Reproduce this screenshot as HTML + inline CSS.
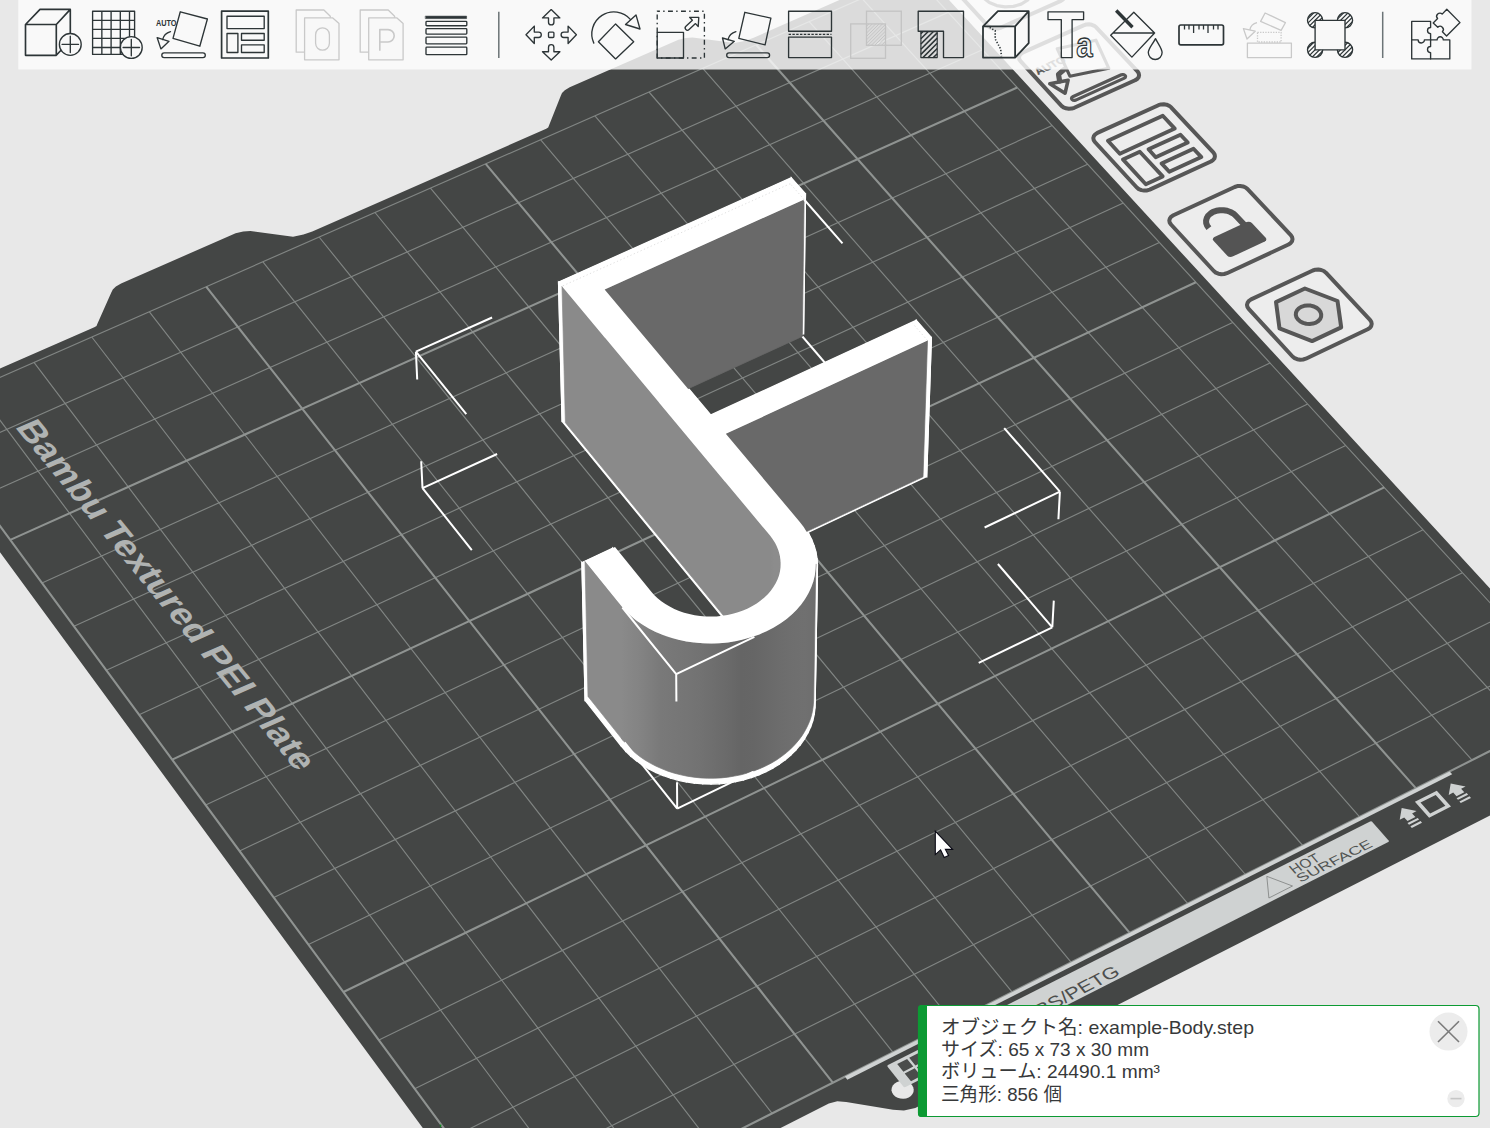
<!DOCTYPE html>
<html><head><meta charset="utf-8"><title>Bambu Studio</title>
<style>
html,body{margin:0;padding:0;background:#e8e8e8;overflow:hidden;font-family:"Liberation Sans",sans-serif}
svg{display:block}
</style></head><body>
<svg width="1490" height="1128" viewBox="0 0 1490 1128">
<title>Bambu Studio 3D view</title><desc>Bambu Textured PEI Plate. オブジェクト名: example-Body.step サイズ: 65 x 73 x 30 mm ボリューム: 24490.1 mm³ 三角形: 856 個</desc>
<rect width="1490" height="1128" fill="#e8e8e8"/>
<path d="M519.7 1260 L828.8 1103.6 L837.3 1101.3 L846.2 1102 L893.1 1109.8 L903.9 1110.6 L915.3 1107.9 L1632.2 743.1 L917.5 -34.3 L753 38 L744.5 40.9 L734.5 43 L692.6 37.4 L685.6 37.9 L678.4 39.8 L569.7 87.3 L564.8 90.2 L562 93 L560.7 95.9 L548.9 125.8 L548.2 127.6 L546.2 128.8 L312.3 231.5 L303.5 234.6 L293 236.7 L250.4 230.9 L243.2 231.4 L235.6 233.3 L121.1 283.4 L115.9 286.5 L112.8 289.5 L111.3 292.5 L97.3 324 L96.5 326 L94.3 327.2 L-102 413.4Z" fill="#444645"/>
<path d="M912 1085.1 L910.1 1083.3 L907.7 1082 L905 1081.1 L902.1 1080.9 L899.2 1081.3 L896.6 1082.3 L894.4 1083.7 L892.8 1085.6 L891.8 1087.8 L891.5 1090.2 L892.1 1092.5 L893.3 1094.6 L895.2 1096.4 L897.6 1097.7 L900.3 1098.6 L903.2 1098.8 L906.1 1098.4 L908.7 1097.4 L910.9 1095.9 L912.5 1094 L913.5 1091.9 L913.7 1089.5 L913.2 1087.2Z" fill="#e8e8e8"/>
<path d="M587.3 1206.6L-24.1 387.9M487.7 1187.8L1542.4 659.8M649.4 1175.3L34 362.4M451 1138L1502.2 616M711 1144.2L91.8 337M414.7 1088.8L1462.4 572.7M772.1 1113.4L149.2 311.7M378.9 1040.1L1423.1 529.8M893 1052.3L262.9 261.8M308.4 944.5L1345.7 445.5M952.8 1022.1L319.1 237M273.8 897.5L1307.7 404M1012.2 992.2L375 212.5M239.5 851L1270 363M1071.2 962.4L430.5 188.1M205.7 805.1L1232.7 322.4M1187.8 903.6L540.5 139.7M139.1 714.7L1159.4 242.5M1245.4 874.5L594.9 115.8M106.4 670.3L1123.3 203.1M1302.7 845.5L649 92M74 626.3L1087.6 164.2M1359.6 816.8L702.8 68.4M42 582.9L1052.2 125.6M1472.1 760.1L809.2 21.6M-21 497.4L982.5 49.8M1527.7 732L861.9 -1.6M-52 455.3L948.2 12.4M1583 704.1L914.3 -24.6M-82.7 413.7L914.3 -24.6" stroke="#818583" stroke-width="1.15" fill="none"/>
<path d="M524.8 1238.2L-82.7 413.7M524.8 1238.2L1583 704.1M832.8 1082.7L206.2 286.7M343.4 992L1384.2 487.4M1129.7 932.9L485.7 163.8M172.2 759.6L1195.9 282.2M1416 788.4L756.2 44.9M10.3 539.9L1017.2 87.5" stroke="#8f9391" stroke-width="2.1" fill="none"/>
<path d="M440.4 1128L439.6 1124.6L441.6 1124.8Z" fill="#0d8a1c"/>
<text transform="matrix(0.633 0.774 -0.914 0.404 14.6 426.7)" font-family="'Liberation Sans', sans-serif" font-size="35" font-weight="bold" fill="#b0b3b2" textLength="446" lengthAdjust="spacingAndGlyphs">Bambu Textured PEI Plate</text>
<path d="M847.3 1079.7 L1452.2 774.2 L1449.7 771.4 L844.9 1076.6Z" fill="#cfd2d2"/>
<path d="M1372.1 821.8 L1371.2 821.3 L1370.1 821.4 L888 1065.1 L887.4 1065.8 L887.6 1066.7 L903.5 1086.7 L904.4 1087.2 L905.5 1087 L1388.3 842.1 L1388.9 841.4 L1388.6 840.6Z" fill="#cfd2d2"/>
<path d="M911 1081.2 L920.9 1076.1 L914.7 1068.3 L904.7 1073.4ZM903.4 1071.7 L913.3 1066.6 L907.1 1058.9 L897.2 1063.9ZM923 1075.1 L932.9 1070 L926.7 1062.3 L916.8 1067.3ZM915.4 1065.6 L925.3 1060.6 L919.1 1052.8 L909.2 1057.8Z" fill="#4a4c4b"/>
<text transform="matrix(0.888 -0.459 0.627 0.778 988 1043.2)" font-family="'Liberation Sans', sans-serif" font-size="17.6" fill="#4c4e4d" textLength="150" lengthAdjust="spacingAndGlyphs">PLA/ABS/PETG</text>
<text transform="matrix(0.892 -0.452 0.65 0.76 1294.1 874.2)" font-family="'Liberation Sans', sans-serif" font-size="14" fill="#505251" textLength="30.6" lengthAdjust="spacingAndGlyphs">HOT</text>
<text transform="matrix(0.894 -0.448 0.65 0.76 1300.6 882.7)" font-family="'Liberation Sans', sans-serif" font-size="13" fill="#505251" textLength="81.7" lengthAdjust="spacingAndGlyphs">SURFACE</text>
<path d="M1266.8 876.3 L1268.9 898 L1292.5 886Z" fill="none" stroke="#7c7f7e" stroke-width="0.8" stroke-linejoin="round"/>
<path d="M1401.7 808.1 L1416.6 811.1 L1412.1 813.4 L1415.4 817.1 L1407.5 821.1 L1404.2 817.4 L1399.7 819.7ZM1407.5 823 L1417.7 817.9 L1419.1 819.5 L1409 824.7ZM1410.4 826.3 L1420.6 821.1 L1422 822.7 L1411.8 827.9ZM1450.7 783.4 L1465.6 786.4 L1461.1 788.7 L1464.3 792.3 L1456.5 796.3 L1453.2 792.6 L1448.7 794.9ZM1456.6 798.2 L1466.7 793.1 L1468.1 794.7 L1458 799.8ZM1459.4 801.4 L1469.5 796.3 L1471 797.9 L1460.8 803Z" fill="#cfd2d2"/>
<path d="M1429.1 817.8 L1451 806.6 L1436.8 790.7 L1414.9 801.8ZM1430.2 813.6 L1445.4 805.8 L1435.7 794.9 L1420.5 802.6Z" fill="#cfd2d2" fill-rule="evenodd"/>
<path d="M1325.9 272.7 L1323.8 271 L1321.2 270 L1318.3 269.5 L1315.4 269.7 L1312.8 270.5 L1251.1 299.4 L1249 300.8 L1247.6 302.7 L1247 304.8 L1247.4 306.9 L1248.7 308.9 L1292.5 356.5 L1294.6 358.1 L1297.2 359.2 L1300.2 359.7 L1303.1 359.5 L1305.8 358.7 L1367.7 329.3 L1369.9 327.9 L1371.2 326 L1371.7 323.9 L1371.3 321.8 L1370 319.8Z" fill="#ededed" stroke="#575757" stroke-width="4.0" stroke-linejoin="round"/>
<path d="M1337.5 301 L1304.9 288.5 L1276 302.1 L1279.5 328.4 L1312.1 341.1 L1341.2 327.4Z" fill="#d8d8d8" stroke="#575757" stroke-width="4.0" stroke-linejoin="round" stroke-linecap="round"/>
<path d="M1319 309.8 L1316.7 307.9 L1313.9 306.5 L1310.7 305.6 L1307.4 305.4 L1304.2 305.8 L1301.2 306.8 L1298.8 308.4 L1297 310.3 L1296 312.6 L1295.8 315 L1296.5 317.4 L1298.1 319.6 L1300.3 321.5 L1303.1 322.9 L1306.3 323.8 L1309.7 324 L1312.9 323.6 L1315.9 322.6 L1318.3 321 L1320.1 319.1 L1321.1 316.8 L1321.2 314.4 L1320.5 312Z" fill="#d8d8d8" stroke="#575757" stroke-width="4.0" stroke-linejoin="round" stroke-linecap="round"/>
<path d="M1247.6 189.1 L1245.6 187.5 L1243.1 186.4 L1240.2 186 L1237.3 186.1 L1234.7 187 L1173.4 215.3 L1171.3 216.6 L1169.9 218.4 L1169.3 220.5 L1169.7 222.6 L1171 224.5 L1213.8 271 L1215.8 272.6 L1218.4 273.7 L1221.3 274.2 L1224.2 274 L1226.9 273.2 L1288.5 244.5 L1290.6 243.1 L1292 241.3 L1292.5 239.2 L1292.1 237.1 L1290.8 235.2Z" fill="#ededed" stroke="#575757" stroke-width="4.0" stroke-linejoin="round"/>
<path d="M1251.9 222.9 L1250.4 222 L1248.5 221.7 L1246.7 222.1 L1214.4 237 L1213.2 238.1 L1212.8 239.4 L1213.5 240.8 L1227.3 255.7 L1228.7 256.7 L1230.7 257 L1232.5 256.6 L1264.8 241.5 L1266 240.5 L1266.4 239.1 L1265.7 237.8Z" fill="#545454"/>
<path d="M1208.9 228.1 L1208.9 228.1 L1207.2 225.8 L1206.2 223.2 L1206.1 220.6 L1206.8 218 L1208.2 215.6 L1210.4 213.6 L1213.1 211.9 L1216.3 210.8 L1219.9 210.2 L1223.5 210.2 L1227.1 210.8 L1230.4 212 L1233.4 213.6 L1235.8 215.7 L1244.3 224.8" fill="none" stroke="#545454" stroke-width="6" stroke-linecap="butt" stroke-linejoin="round"/>
<path d="M1171.1 107.3 L1169.2 105.8 L1166.6 104.7 L1163.8 104.3 L1161 104.4 L1158.4 105.2 L1097.4 132.9 L1095.3 134.3 L1093.9 136 L1093.3 138 L1093.7 140.1 L1094.9 142 L1136.8 187.5 L1138.8 189.1 L1141.4 190.1 L1144.2 190.6 L1147.1 190.4 L1149.7 189.6 L1210.9 161.5 L1213 160.1 L1214.4 158.4 L1214.9 156.4 L1214.6 154.3 L1213.3 152.4Z" fill="#ededed" stroke="#575757" stroke-width="4.0" stroke-linejoin="round"/>
<path d="M1119.8 153.7 L1174.8 128.6 L1162.8 115.8 L1107.9 140.8Z" fill="none" stroke="#575757" stroke-width="3.8" stroke-linejoin="round" stroke-linecap="round"/>
<path d="M1145.8 184.2 L1162.7 176.4 L1139.8 151.7 L1122.9 159.4Z" fill="none" stroke="#575757" stroke-width="3.8" stroke-linejoin="round" stroke-linecap="round"/>
<path d="M1155.7 157.2 L1187.8 142.5 L1180.5 134.7 L1148.5 149.3Z" fill="none" stroke="#575757" stroke-width="3.8" stroke-linejoin="round" stroke-linecap="round"/>
<path d="M1169.3 171.8 L1201.4 157.1 L1193.5 148.7 L1161.5 163.4Z" fill="none" stroke="#575757" stroke-width="3.8" stroke-linejoin="round" stroke-linecap="round"/>
<path d="M1096.2 27.3 L1094.3 25.8 L1091.8 24.8 L1089 24.3 L1086.2 24.5 L1083.6 25.3 L1023.1 52.4 L1021 53.7 L1019.6 55.4 L1019 57.4 L1019.3 59.4 L1020.5 61.2 L1061.5 105.8 L1063.5 107.3 L1066 108.3 L1068.8 108.8 L1071.7 108.6 L1074.3 107.8 L1135.1 80.3 L1137.2 79 L1138.6 77.3 L1139.1 75.3 L1138.7 73.3 L1137.5 71.4Z" fill="#ededed" stroke="#575757" stroke-width="4.0" stroke-linejoin="round"/>
<path d="M1125.1 75.5 L1124.1 74.8 L1122.7 74.5 L1121.3 74.8 L1072.7 96.8 L1071.8 97.5 L1071.5 98.5 L1072 99.5 L1072 99.5 L1073 100.2 L1074.4 100.4 L1075.8 100.1 L1124.4 78.1 L1125.3 77.4 L1125.6 76.4 L1125.1 75.5Z" fill="none" stroke="#575757" stroke-width="3.2" stroke-linejoin="round" stroke-linecap="round"/>
<path d="M1049.8 83.7 L1068.1 80.2 L1065.1 93.2Z" fill="#ededed" stroke="#575757" stroke-width="3.6" stroke-linejoin="round" stroke-linecap="round"/>
<path d="M1063.8 69.7 L1058.5 74.4 L1059.6 80.9" fill="none" stroke="#575757" stroke-width="5.2" stroke-linejoin="round" stroke-linecap="round"/>
<path d="M1057.2 48.7 L1095.9 40.2 L1108.8 68.3 L1069.9 76.2Z" fill="none" stroke="#575757" stroke-width="3.2" stroke-linejoin="round" stroke-linecap="round"/>
<text transform="matrix(1.03 -0.481 0.712 0.782 1038 75.1)" font-family="'Liberation Sans', sans-serif" font-size="10" font-weight="bold" fill="#575757" stroke="#575757" stroke-width="0.3">AUTO</text>
<path d="M1023 -51 L1021.1 -52.4 L1018.6 -53.5 L1015.9 -53.9 L1013.1 -53.7 L1010.5 -53 L950.3 -26.5 L948.2 -25.2 L946.8 -23.5 L946.2 -21.6 L946.5 -19.6 L947.7 -17.8 L987.8 25.8 L989.8 27.3 L992.2 28.3 L995 28.8 L997.8 28.6 L1000.4 27.8 L1060.9 0.9 L1062.9 -0.4 L1064.3 -2.1 L1064.9 -4 L1064.6 -6 L1063.4 -7.8Z" fill="#ededed" stroke="#575757" stroke-width="4.0" stroke-linejoin="round"/>
<path d="M1028.8 -22 L1023.1 -26.5 L1015.7 -29.5 L1007.5 -30.8 L999.1 -30.3 L991.4 -28 L985.1 -24.2 L980.9 -19.1 L979.2 -13.3 L980.1 -7.4 L983.6 -2 L989.3 2.5 L996.7 5.6 L1005 6.9 L1013.5 6.4 L1021.2 4.1 L1027.5 0.2 L1031.6 -4.9 L1033.3 -10.7 L1032.3 -16.6Z" fill="none" stroke="#575757" stroke-width="3.2" stroke-linejoin="round" stroke-linecap="round"/>
<path d="M803.6 333.5 L789.7 317.4 L791.3 177.7 L805.5 193.8Z" fill="#fff" stroke="#fff" stroke-width="1.2"/>
<path d="M789.7 317.4 L562.1 421.4 L558.5 282.1 L791.3 177.7Z" fill="#fff" stroke="#fff" stroke-width="1.2"/>
<path d="M604.6 424.7 L803.6 333.5 L805.5 193.8 L602 285.4Z" fill="#fff" stroke="#fff" stroke-width="1.2"/>
<path d="M926.7 476.6 L911.9 459.5 L916.3 320.3 L931.4 337.5Z" fill="#fff" stroke="#fff" stroke-width="1.2"/>
<path d="M711 553.7 L604.6 424.7 L602 285.4 L710.8 415Z" fill="#fff" stroke="#fff" stroke-width="1.2"/>
<path d="M911.9 459.5 L711 553.7 L710.8 415 L916.3 320.3Z" fill="#fff" stroke="#fff" stroke-width="1.2"/>
<path d="M725.4 571.3 L926.7 476.6 L931.4 337.5 L725.6 432.6Z" fill="#fff" stroke="#fff" stroke-width="1.2"/>
<path d="M562.1 421.4 L769.6 674.7 L770.7 536.6 L558.5 282.1Z" fill="#fff" stroke="#fff" stroke-width="1.2"/>
<path d="M799.1 660.5 L725.4 571.3 L725.6 432.6 L800.9 522.4Z" fill="#fff" stroke="#fff" stroke-width="1.2"/>
<path d="M803.2 666 L799.1 660.5 L800.9 522.4 L805.1 527.9Z" fill="#fff" stroke="#fff" stroke-width="1.2"/>
<path d="M806.7 671.6 L803.2 666 L805.1 527.9 L808.7 533.5Z" fill="#fff" stroke="#fff" stroke-width="1.2"/>
<path d="M809.6 677.5 L806.7 671.6 L808.7 533.5 L811.7 539.4Z" fill="#fff" stroke="#fff" stroke-width="1.2"/>
<path d="M769.6 674.7 L772.3 678.3 L773.5 540.2 L770.7 536.6Z" fill="#fff" stroke="#fff" stroke-width="1.2"/>
<path d="M772.3 678.3 L774.6 682.1 L775.9 544 L773.5 540.2Z" fill="#fff" stroke="#fff" stroke-width="1.2"/>
<path d="M812 683.5 L809.6 677.5 L811.7 539.4 L814.1 545.5Z" fill="#fff" stroke="#fff" stroke-width="1.2"/>
<path d="M774.6 682.1 L776.6 686 L777.9 548 L775.9 544Z" fill="#fff" stroke="#fff" stroke-width="1.2"/>
<path d="M813.7 689.7 L812 683.5 L814.1 545.5 L815.9 551.7Z" fill="#fff" stroke="#fff" stroke-width="1.2"/>
<path d="M776.6 686 L778.1 690 L779.5 552 L777.9 548Z" fill="#fff" stroke="#fff" stroke-width="1.2"/>
<path d="M778.1 690 L779.2 694.1 L780.6 556.1 L779.5 552Z" fill="#fff" stroke="#fff" stroke-width="1.2"/>
<path d="M814.8 695.9 L813.7 689.7 L815.9 551.7 L817 558Z" fill="#fff" stroke="#fff" stroke-width="1.2"/>
<path d="M615 686.3 L585.1 700.5 L581.9 562.6 L612.6 548.3Z" fill="#fff" stroke="#fff" stroke-width="1.2"/>
<path d="M779.2 694.1 L779.9 698.3 L781.4 560.3 L780.6 556.1Z" fill="#fff" stroke="#fff" stroke-width="1.2"/>
<path d="M815.2 702.2 L814.8 695.9 L817 558 L817.5 564.3Z" fill="#fff" stroke="#fff" stroke-width="1.2"/>
<path d="M779.9 698.3 L780.2 702.5 L781.6 564.5 L781.4 560.3Z" fill="#fff" stroke="#fff" stroke-width="1.2"/>
<path d="M780.2 702.5 L780.1 706.7 L781.5 568.8 L781.6 564.5Z" fill="#fff" stroke="#fff" stroke-width="1.2"/>
<path d="M815 708.5 L815.2 702.2 L817.5 564.3 L817.3 570.7Z" fill="#fff" stroke="#fff" stroke-width="1.2"/>
<path d="M780.1 706.7 L779.5 710.8 L780.9 573 L781.5 568.8Z" fill="#fff" stroke="#fff" stroke-width="1.2"/>
<path d="M651 731.4 L615 686.3 L612.6 548.3 L649.3 593.6Z" fill="#fff" stroke="#fff" stroke-width="1.2"/>
<path d="M814.2 714.8 L815 708.5 L817.3 570.7 L816.4 577Z" fill="#fff" stroke="#fff" stroke-width="1.2"/>
<path d="M779.5 710.8 L778.5 715 L779.9 577.1 L780.9 573Z" fill="#fff" stroke="#fff" stroke-width="1.2"/>
<path d="M778.5 715 L777 719.1 L778.4 581.2 L779.9 577.1Z" fill="#fff" stroke="#fff" stroke-width="1.2"/>
<path d="M812.7 721.1 L814.2 714.8 L816.4 577 L814.9 583.3Z" fill="#fff" stroke="#fff" stroke-width="1.2"/>
<path d="M777 719.1 L775.2 723 L776.5 585.2 L778.4 581.2Z" fill="#fff" stroke="#fff" stroke-width="1.2"/>
<path d="M585.1 700.5 L620.9 745.7 L618.6 608 L581.9 562.6Z" fill="#fff" stroke="#fff" stroke-width="1.2"/>
<path d="M810.6 727.2 L812.7 721.1 L814.9 583.3 L812.7 589.4Z" fill="#fff" stroke="#fff" stroke-width="1.2"/>
<path d="M775.2 723 L773 726.9 L774.2 589.1 L776.5 585.2Z" fill="#fff" stroke="#fff" stroke-width="1.2"/>
<path d="M773 726.9 L770.3 730.6 L771.5 592.8 L774.2 589.1Z" fill="#fff" stroke="#fff" stroke-width="1.2"/>
<path d="M807.8 733.2 L810.6 727.2 L812.7 589.4 L809.9 595.4Z" fill="#fff" stroke="#fff" stroke-width="1.2"/>
<path d="M770.3 730.6 L767.3 734.1 L768.5 596.4 L771.5 592.8Z" fill="#fff" stroke="#fff" stroke-width="1.2"/>
<path d="M654 734.9 L651 731.4 L649.3 593.6 L652.5 597.1Z" fill="#fff" stroke="#fff" stroke-width="1.2"/>
<path d="M767.3 734.1 L764 737.5 L765 599.8 L768.5 596.4Z" fill="#fff" stroke="#fff" stroke-width="1.2"/>
<path d="M804.5 739 L807.8 733.2 L809.9 595.4 L806.5 601.3Z" fill="#fff" stroke="#fff" stroke-width="1.2"/>
<path d="M657.4 738.2 L654 734.9 L652.5 597.1 L656 600.4Z" fill="#fff" stroke="#fff" stroke-width="1.2"/>
<path d="M764 737.5 L760.3 740.6 L761.2 602.9 L765 599.8Z" fill="#fff" stroke="#fff" stroke-width="1.2"/>
<path d="M661.1 741.3 L657.4 738.2 L656 600.4 L659.8 603.6Z" fill="#fff" stroke="#fff" stroke-width="1.2"/>
<path d="M800.5 744.6 L804.5 739 L806.5 601.3 L802.4 606.9Z" fill="#fff" stroke="#fff" stroke-width="1.2"/>
<path d="M760.3 740.6 L756.3 743.5 L757.1 605.8 L761.2 602.9Z" fill="#fff" stroke="#fff" stroke-width="1.2"/>
<path d="M665.2 744.1 L661.1 741.3 L659.8 603.6 L663.9 606.4Z" fill="#fff" stroke="#fff" stroke-width="1.2"/>
<path d="M756.3 743.5 L752 746.2 L752.7 608.5 L757.1 605.8Z" fill="#fff" stroke="#fff" stroke-width="1.2"/>
<path d="M669.5 746.7 L665.2 744.1 L663.9 606.4 L668.3 609Z" fill="#fff" stroke="#fff" stroke-width="1.2"/>
<path d="M796 749.9 L800.5 744.6 L802.4 606.9 L797.8 612.3Z" fill="#fff" stroke="#fff" stroke-width="1.2"/>
<path d="M752 746.2 L747.4 748.6 L748.1 610.9 L752.7 608.5Z" fill="#fff" stroke="#fff" stroke-width="1.2"/>
<path d="M674.1 749 L669.5 746.7 L668.3 609 L673 611.4Z" fill="#fff" stroke="#fff" stroke-width="1.2"/>
<path d="M620.9 745.7 L625.5 751 L623.3 613.4 L618.6 608Z" fill="#fff" stroke="#fff" stroke-width="1.2"/>
<path d="M747.4 748.6 L742.6 750.7 L743.2 613 L748.1 610.9Z" fill="#fff" stroke="#fff" stroke-width="1.2"/>
<path d="M678.9 751.1 L674.1 749 L673 611.4 L678 613.5Z" fill="#fff" stroke="#fff" stroke-width="1.2"/>
<path d="M742.6 750.7 L737.6 752.5 L738.1 614.9 L743.2 613Z" fill="#fff" stroke="#fff" stroke-width="1.2"/>
<path d="M791 754.9 L796 749.9 L797.8 612.3 L792.7 617.3Z" fill="#fff" stroke="#fff" stroke-width="1.2"/>
<path d="M683.9 752.8 L678.9 751.1 L678 613.5 L683.1 615.2Z" fill="#fff" stroke="#fff" stroke-width="1.2"/>
<path d="M737.6 752.5 L732.5 754 L732.8 616.4 L738.1 614.9Z" fill="#fff" stroke="#fff" stroke-width="1.2"/>
<path d="M689.1 754.3 L683.9 752.8 L683.1 615.2 L688.4 616.7Z" fill="#fff" stroke="#fff" stroke-width="1.2"/>
<path d="M625.5 751 L630.6 756 L628.5 618.4 L623.3 613.4Z" fill="#fff" stroke="#fff" stroke-width="1.2"/>
<path d="M732.5 754 L727.2 755.2 L727.4 617.6 L732.8 616.4Z" fill="#fff" stroke="#fff" stroke-width="1.2"/>
<path d="M694.4 755.4 L689.1 754.3 L688.4 616.7 L693.8 617.8Z" fill="#fff" stroke="#fff" stroke-width="1.2"/>
<path d="M727.2 755.2 L721.8 756.1 L721.9 618.5 L727.4 617.6Z" fill="#fff" stroke="#fff" stroke-width="1.2"/>
<path d="M699.8 756.2 L694.4 755.4 L693.8 617.8 L699.4 618.6Z" fill="#fff" stroke="#fff" stroke-width="1.2"/>
<path d="M721.8 756.1 L716.3 756.6 L716.3 619 L721.9 618.5Z" fill="#fff" stroke="#fff" stroke-width="1.2"/>
<path d="M705.3 756.7 L699.8 756.2 L699.4 618.6 L705 619.1Z" fill="#fff" stroke="#fff" stroke-width="1.2"/>
<path d="M716.3 756.6 L710.8 756.8 L710.6 619.2 L716.3 619Z" fill="#fff" stroke="#fff" stroke-width="1.2"/>
<path d="M710.8 756.8 L705.3 756.7 L705 619.1 L710.6 619.2Z" fill="#fff" stroke="#fff" stroke-width="1.2"/>
<path d="M785.4 759.7 L791 754.9 L792.7 617.3 L787 622.1Z" fill="#fff" stroke="#fff" stroke-width="1.2"/>
<path d="M630.6 756 L636.2 760.6 L634.2 623.1 L628.5 618.4Z" fill="#fff" stroke="#fff" stroke-width="1.2"/>
<path d="M779.4 764.1 L785.4 759.7 L787 622.1 L780.8 626.5Z" fill="#fff" stroke="#fff" stroke-width="1.2"/>
<path d="M636.2 760.6 L642.3 765 L640.5 627.4 L634.2 623.1Z" fill="#fff" stroke="#fff" stroke-width="1.2"/>
<path d="M773 768.1 L779.4 764.1 L780.8 626.5 L774.2 630.6Z" fill="#fff" stroke="#fff" stroke-width="1.2"/>
<path d="M642.3 765 L648.8 768.9 L647.1 631.4 L640.5 627.4Z" fill="#fff" stroke="#fff" stroke-width="1.2"/>
<path d="M766.1 771.7 L773 768.1 L774.2 630.6 L767.2 634.2Z" fill="#fff" stroke="#fff" stroke-width="1.2"/>
<path d="M648.8 768.9 L655.7 772.4 L654.2 634.9 L647.1 631.4Z" fill="#fff" stroke="#fff" stroke-width="1.2"/>
<path d="M758.9 774.9 L766.1 771.7 L767.2 634.2 L759.9 637.4Z" fill="#fff" stroke="#fff" stroke-width="1.2"/>
<path d="M655.7 772.4 L662.9 775.5 L661.6 638 L654.2 634.9Z" fill="#fff" stroke="#fff" stroke-width="1.2"/>
<path d="M751.4 777.6 L758.9 774.9 L759.9 637.4 L752.2 640.2Z" fill="#fff" stroke="#fff" stroke-width="1.2"/>
<path d="M662.9 775.5 L670.5 778.1 L669.3 640.7 L661.6 638Z" fill="#fff" stroke="#fff" stroke-width="1.2"/>
<path d="M743.6 779.9 L751.4 777.6 L752.2 640.2 L744.2 642.4Z" fill="#fff" stroke="#fff" stroke-width="1.2"/>
<path d="M670.5 778.1 L678.3 780.3 L677.3 642.9 L669.3 640.7Z" fill="#fff" stroke="#fff" stroke-width="1.2"/>
<path d="M735.7 781.7 L743.6 779.9 L744.2 642.4 L736.1 644.3Z" fill="#fff" stroke="#fff" stroke-width="1.2"/>
<path d="M678.3 780.3 L686.3 782 L685.5 644.6 L677.3 642.9Z" fill="#fff" stroke="#fff" stroke-width="1.2"/>
<path d="M727.5 783 L735.7 781.7 L736.1 644.3 L727.7 645.6Z" fill="#fff" stroke="#fff" stroke-width="1.2"/>
<path d="M686.3 782 L694.4 783.2 L693.8 645.8 L685.5 644.6Z" fill="#fff" stroke="#fff" stroke-width="1.2"/>
<path d="M719.3 783.8 L727.5 783 L727.7 645.6 L719.3 646.4Z" fill="#fff" stroke="#fff" stroke-width="1.2"/>
<path d="M694.4 783.2 L702.7 783.9 L702.3 646.5 L693.8 645.8Z" fill="#fff" stroke="#fff" stroke-width="1.2"/>
<path d="M711 784.1 L719.3 783.8 L719.3 646.4 L710.8 646.7Z" fill="#fff" stroke="#fff" stroke-width="1.2"/>
<path d="M702.7 783.9 L711 784.1 L710.8 646.7 L702.3 646.5Z" fill="#fff" stroke="#fff" stroke-width="1.2"/>
<path d="M558.5 282.1 L770.7 536.6 L773.5 540.2 L775.9 544 L777.9 548 L779.5 552 L780.6 556.1 L781.4 560.3 L781.6 564.5 L781.5 568.8 L780.9 573 L779.9 577.1 L778.4 581.2 L776.5 585.2 L774.2 589.1 L771.5 592.8 L768.5 596.4 L765 599.8 L761.2 602.9 L757.1 605.8 L752.7 608.5 L748.1 610.9 L743.2 613 L738.1 614.9 L732.8 616.4 L727.4 617.6 L721.9 618.5 L716.3 619 L710.6 619.2 L705 619.1 L699.4 618.6 L693.8 617.8 L688.4 616.7 L683.1 615.2 L678 613.5 L673 611.4 L668.3 609 L663.9 606.4 L659.8 603.6 L656 600.4 L652.5 597.1 L649.3 593.6 L612.6 548.3 L581.9 562.6 L618.6 608 L623.3 613.4 L628.5 618.4 L634.2 623.1 L640.5 627.4 L647.1 631.4 L654.2 634.9 L661.6 638 L669.3 640.7 L677.3 642.9 L685.5 644.6 L693.8 645.8 L702.3 646.5 L710.8 646.7 L719.3 646.4 L727.7 645.6 L736.1 644.3 L744.2 642.4 L752.2 640.2 L759.9 637.4 L767.2 634.2 L774.2 630.6 L780.8 626.5 L787 622.1 L792.7 617.3 L797.8 612.3 L802.4 606.9 L806.5 601.3 L809.9 595.4 L812.7 589.4 L814.9 583.3 L816.4 577 L817.3 570.7 L817.5 564.3 L817 558 L815.9 551.7 L814.1 545.5 L811.7 539.4 L808.7 533.5 L805.1 527.9 L800.9 522.4 L725.6 432.6 L931.4 337.5 L916.3 320.3 L710.8 415 L602 285.4 L805.5 193.8 L791.3 177.7Z" fill="#fff"/>
<path d="M802.3 336.4L839.8 380.1" stroke="#fff" stroke-width="2.2" fill="none" stroke-linecap="butt"/>
<path d="M607.1 425.9 L802.3 336.4 L804.1 199.5 L604.6 289.4Z" fill="#696969" stroke="#696969" stroke-width="0.7"/>
<path d="M725.6 569.7 L923 476.8 L927.5 340.5 L725.8 433.8Z" fill="#696969" stroke="#696969" stroke-width="0.7"/>
<path d="M565.4 422.7 L768.9 671 L770 535.6 L562 286.2Z" fill="#8a8a8a" stroke="#8a8a8a" stroke-width="0.7"/>
<linearGradient id="cg1" gradientUnits="userSpaceOnUse" x1="770" y1="0" x2="780.7" y2="0"><stop offset="0.000" stop-color="#8a8a8a"/><stop offset="0.215" stop-color="#8b8b8b"/><stop offset="0.405" stop-color="#8c8c8c"/><stop offset="0.570" stop-color="#8c8c8c"/><stop offset="0.709" stop-color="#8c8c8c"/><stop offset="0.822" stop-color="#8c8c8c"/><stop offset="0.907" stop-color="#8b8b8b"/><stop offset="0.965" stop-color="#8a8a8a"/><stop offset="0.995" stop-color="#898989"/><stop offset="1.000" stop-color="#888888"/></linearGradient><path d="M767.1 668.8 L768.9 671 L771.1 674 L773.1 677 L774.8 680.2 L776.3 683.4 L777.5 686.7 L778.4 690.1 L779 693.5 L779.3 696.9 L779.3 699 L780.7 563.8 L780.7 561.7 L780.3 558.2 L779.7 554.8 L778.8 551.4 L777.6 548.1 L776.1 544.8 L774.3 541.7 L772.3 538.6 L770 535.6 L768.2 533.4Z" fill="url(#cg1)" stroke="url(#cg1)" stroke-width="0.7"/>
<path d="M588 696.4 L623.2 740.6 L621 605.6 L585 561.1Z" fill="#8a8a8a" stroke="#8a8a8a" stroke-width="0.7"/>
<linearGradient id="cg2" gradientUnits="userSpaceOnUse" x1="621" y1="0" x2="815.8" y2="0"><stop offset="0.000" stop-color="#8a8a8a"/><stop offset="0.041" stop-color="#878787"/><stop offset="0.089" stop-color="#848484"/><stop offset="0.143" stop-color="#7f7f7f"/><stop offset="0.204" stop-color="#797979"/><stop offset="0.268" stop-color="#777777"/><stop offset="0.336" stop-color="#757575"/><stop offset="0.407" stop-color="#727272"/><stop offset="0.478" stop-color="#6e6e6e"/><stop offset="0.549" stop-color="#6a6a6a"/><stop offset="0.618" stop-color="#656565"/><stop offset="0.685" stop-color="#666666"/><stop offset="0.747" stop-color="#696969"/><stop offset="0.805" stop-color="#6c6c6c"/><stop offset="0.856" stop-color="#6e6e6e"/><stop offset="0.901" stop-color="#6f6f6f"/><stop offset="0.938" stop-color="#707070"/><stop offset="0.967" stop-color="#6f6f6f"/><stop offset="0.987" stop-color="#6e6e6e"/><stop offset="0.998" stop-color="#6d6d6d"/><stop offset="1.000" stop-color="#6b6b6b"/></linearGradient><path d="M621.4 738.4 L623.2 740.6 L626.9 745 L630.9 749.1 L635.4 753 L640.1 756.7 L645.2 760.2 L650.5 763.3 L656.1 766.2 L662 768.8 L668 771.2 L674.3 773.2 L680.7 774.8 L687.2 776.2 L693.9 777.2 L700.6 777.9 L707.4 778.2 L714.2 778.2 L721 777.9 L727.7 777.2 L734.3 776.1 L740.9 774.8 L747.3 773.1 L753.6 771 L759.6 768.7 L765.5 766.1 L771.1 763.2 L776.5 760 L781.5 756.5 L786.3 752.8 L790.7 748.9 L794.8 744.7 L798.5 740.4 L801.9 735.9 L804.8 731.2 L807.3 726.4 L809.5 721.5 L811.2 716.5 L812.4 711.4 L813.2 706.3 L813.6 701.1 L813.7 699.1 L815.8 563.9 L815.8 565.9 L815.4 571.1 L814.6 576.3 L813.3 581.4 L811.5 586.4 L809.4 591.3 L806.8 596.2 L803.8 600.9 L800.4 605.4 L796.6 609.8 L792.4 613.9 L787.9 617.9 L783 621.6 L777.8 625.1 L772.3 628.3 L766.6 631.2 L760.6 633.9 L754.4 636.2 L748 638.3 L741.4 640 L734.7 641.4 L727.9 642.4 L721 643.1 L714.1 643.4 L707.1 643.5 L700.2 643.1 L693.3 642.4 L686.5 641.4 L679.8 640.1 L673.2 638.4 L666.8 636.4 L660.6 634 L654.6 631.4 L648.9 628.5 L643.4 625.3 L638.3 621.8 L633.4 618.1 L628.9 614.2 L624.7 610 L621 605.6 L619.1 603.4Z" fill="url(#cg2)" stroke="url(#cg2)" stroke-width="0.7"/>
<path d="M562 286.2 L770 535.6 L772.7 539.2 L775.1 542.9 L777 546.8 L778.6 550.8 L779.7 554.8 L780.4 558.9 L780.7 563 L780.6 567.2 L780 571.3 L779 575.4 L777.5 579.4 L775.7 583.3 L773.4 587.1 L770.8 590.7 L767.8 594.2 L764.4 597.5 L760.7 600.6 L756.7 603.5 L752.4 606.1 L747.8 608.5 L743 610.5 L738 612.3 L732.8 613.8 L727.5 615 L722.1 615.8 L716.6 616.4 L711.1 616.6 L705.6 616.4 L700.1 616 L694.7 615.2 L689.3 614.1 L684.1 612.7 L679.1 610.9 L674.3 608.9 L669.7 606.6 L665.4 604.1 L661.3 601.3 L657.6 598.2 L654.1 594.9 L651.1 591.5 L615 547.1 L585 561.1 L621 605.6 L625.5 610.8 L630.7 615.8 L636.3 620.4 L642.4 624.6 L648.9 628.5 L655.8 631.9 L663.1 635 L670.7 637.6 L678.5 639.7 L686.5 641.4 L694.7 642.6 L703 643.3 L711.3 643.5 L719.6 643.2 L727.9 642.4 L736 641.1 L744 639.3 L751.8 637.1 L759.4 634.4 L766.6 631.2 L773.4 627.7 L779.9 623.7 L785.9 619.4 L791.5 614.7 L796.6 609.8 L801.1 604.5 L805 599 L808.4 593.3 L811.1 587.4 L813.3 581.4 L814.8 575.2 L815.6 569 L815.8 562.8 L815.4 556.6 L814.3 550.4 L812.5 544.4 L810.2 538.4 L807.2 532.7 L803.7 527.1 L799.6 521.7 L725.8 433.8 L927.5 340.5 L912.8 323.6 L711.3 416.5 L604.6 289.4 L804.1 199.5 L790.2 183.7Z" fill="#fff"/>
<path d="M927.5 340.5L912.8 323.6M804.1 199.5L790.2 183.7M790.2 183.7L562 286.2" stroke="#dcdcdc" stroke-width="0.9" stroke-dasharray="1.3 2.4" fill="none"/>
<path d="M415.9 351.7L492.1 317.5M415.9 351.7L466.3 414.1M415.9 351.7L417.2 379.5M422.5 488.1L497.1 454M422.5 488.1L471.8 550.1M422.5 488.1L421.2 461.3M1059.9 491.7L984.6 527.5M1059.9 491.7L1004.2 428.1M1059.9 491.7L1058.4 519.3M1052.3 627.3L978.7 662.9M1052.3 627.3L997.9 564M1052.3 627.3L1053.8 600.6M676.2 674.1L754.4 636.9M676.2 674.1L622.4 607.5M676.2 674.1L676.4 701.5M677.2 808.6L753.6 771.7M677.2 808.6L624.6 742.4M677.2 808.6L677 782.2M804.1 199.5L842.5 243.3" stroke="#fff" stroke-width="2.0" fill="none" stroke-linecap="butt"/>
<rect x="18.3" y="-2" width="1453.2" height="71.5" fill="#fcfcfc" fill-opacity="0.82"/>
<g fill="none" stroke="#2d3537" stroke-width="1.35" stroke-linejoin="round" stroke-linecap="round">
<path d="M25.5 24.5H56.3V55.3H25.5ZM25.5 24.5L40 9.4H70.3L56.3 24.5M70.3 9.4V40.2L56.3 55.3" stroke-width="1.65"/>
<circle cx="70.3" cy="44.4" r="10.9" fill="#f8f8f8"/><path d="M62.1 44.4H78.5M70.3 36.2V52.6"/>
<path d="M92.6 11.2V54.4M101.85 11.2V54.4M111.1 11.2V54.4M120.3 11.2V54.4M129.5 11.2V54.4M134.6 11.2V54.4M92.6 11.2H134.6M92.6 20.3H134.6M92.6 29.4H134.6M92.6 38.4H134.6M92.6 47.5H134.6M92.6 54.4H134.6" stroke-width="1.35"/>
<circle cx="131.3" cy="47.5" r="10.9" fill="#f8f8f8"/><path d="M123.1 47.5H139.5M131.3 39.3V55.7"/>
<path d="M180.3 11.8L207.4 19L199.8 46.2L173 38.4Z"/><path d="M170.5 31.7Q164 33.6 162.6 39.6"/><path d="M157.2 37.7L169 41.3L160.9 48.9Z"/><rect x="161.8" y="52.9" width="43.5" height="4.7" rx="2.35"/>
<rect x="221.6" y="11.2" width="46.7" height="46.8" stroke-width="1.7"/><rect x="227" y="16.3" width="37.2" height="12.3"/><rect x="227" y="33.5" width="10.9" height="19"/><rect x="241.5" y="33.5" width="22.7" height="6.7"/><rect x="241.5" y="44.9" width="22.7" height="7.6"/>
<rect x="425.6" y="16.1" width="41" height="2.5" fill="#2d3537" stroke-width="0.5"/>
<rect x="426" y="21.4" width="40.8" height="4.3" rx="0.8"/>
<rect x="426" y="28.6" width="40.8" height="5.5" rx="0.8"/>
<rect x="426" y="37.1" width="40.8" height="6.8" rx="0.8"/>
<rect x="426" y="47.1" width="40.8" height="7.6" rx="0.8"/>
<path transform="rotate(0 551.2 34.8)" d="M551.2 9.6L559.9 17.9H553.9V22.2a2.7 2.7 0 0 1 -5.4 0V17.9H542.5Z"/>
<path transform="rotate(90 551.2 34.8)" d="M551.2 9.6L559.9 17.9H553.9V22.2a2.7 2.7 0 0 1 -5.4 0V17.9H542.5Z"/>
<path transform="rotate(180 551.2 34.8)" d="M551.2 9.6L559.9 17.9H553.9V22.2a2.7 2.7 0 0 1 -5.4 0V17.9H542.5Z"/>
<path transform="rotate(270 551.2 34.8)" d="M551.2 9.6L559.9 17.9H553.9V22.2a2.7 2.7 0 0 1 -5.4 0V17.9H542.5Z"/>
<rect x="548.5" y="32.1" width="5.4" height="5.4" rx="0.9"/>
<path d="M615.6 23.9L633.7 41.7L615.6 58.9L598.4 41.7Z"/><path d="M593.8 43.1A22.05 22.05 0 0 1 630.6 19.6"/><path d="M636 14.9L640 29L625.5 24.5Z"/>
<rect x="657.2" y="11.2" width="47.2" height="46.8" stroke-dasharray="4.9 3.3 1.4 3.4" stroke-dashoffset="2.2" stroke-linecap="butt"/><rect x="657.2" y="32.3" width="26.3" height="25.7"/>
<path transform="translate(691.6 24.1) rotate(47)" d="M0 -9.8L6.3 -3.2H2.3V5.6a2.3 2.3 0 0 1 -4.6 0V-3.2H-6.3Z"/>
<path d="M744.8 12.3L770.9 18.1L765.1 44.9L738.8 38.4Z"/><path d="M735.9 31.7Q729.4 33.6 728 39.6"/><path d="M722.5 38L734.3 41.3L725.2 48.9Z"/><rect x="726.7" y="52.9" width="42.9" height="4.7" rx="2.35"/>
<rect x="788.6" y="11.2" width="42.9" height="20"/><rect x="788.6" y="37.1" width="42.9" height="20.5"/><path d="M788.6 34.3H831.5" stroke-dasharray="2.4 1.4" stroke-linecap="butt" stroke-width="1.2"/>
<path d="M918.2 11.2H963.5V57.6H943.5V31.2H918.2Z"/>
<path d="M920.9 33.6L922.8 31.7M920.9 38.8L928.0 31.7M920.9 44.0L933.2 31.7M920.9 49.2L937.2 32.9M920.9 54.4L937.2 38.1M922.9 57.6L937.2 43.3M928.1 57.6L937.2 48.5M933.3 57.6L937.2 53.7" stroke-width="1.5" stroke-linecap="butt"/><rect x="920.9" y="31.7" width="16.3" height="25.9" stroke-width="1.2"/>
<path d="M983 26.3H1015.1V57.6H983ZM983 26.3L997.9 11.2H1028.7L1015.1 26.3M1028.7 11.2V43.1L1015.1 57.6" stroke-width="1.8"/>
<path d="M989.7 27.4L995.2 30.8V39L1000.6 48.9L1001.5 56.4" stroke-dasharray="1.3 1.7" stroke-width="1.6" stroke-linecap="butt"/>
<path d="M1048 11.8H1083.6V19.6H1072.1V57.6H1061.3V19.6H1048Z"/>
<text transform="translate(1076.3 57.4) scale(0.84 1)" font-family="'Liberation Sans', sans-serif" font-size="35" font-weight="bold" stroke-width="1.3">a</text>
<path d="M1133.8 12.3L1154.6 33L1131.9 57.1L1110.7 35.3ZM1113 33H1154.6"/><path d="M1116.2 10.5L1132.5 27.2" stroke-width="3.4" stroke-linecap="butt"/>
<path d="M1155.5 38.6C1152.5 44.5 1148.3 48.5 1148.3 52.6a6.9 6.9 0 0 0 13.8 0C1162.1 48.5 1158.5 44.5 1155.5 38.6Z"/>
<rect x="1179" y="25" width="44.5" height="19.8" rx="1.8" stroke-width="1.7"/>
<path d="M1184.5 25V29.6M1189 25V29.6M1193.6 25V33M1199 25V29.6M1203.5 25V29.6M1208 25V33M1213.5 25V29.6M1218 25V29.6" stroke-width="1.3" stroke-linecap="butt"/>
<clipPath id="be1"><circle cx="1315.1" cy="20.3" r="7.6"/></clipPath>
<path d="M1279.7 29.3L1297.7 11.3M1284.1 29.3L1302.1 11.3M1288.5 29.3L1306.5 11.3M1292.9 29.3L1310.9 11.3M1297.3 29.3L1315.3 11.3M1301.7 29.3L1319.7 11.3M1306.1 29.3L1324.1 11.3M1310.5 29.3L1328.5 11.3M1314.9 29.3L1332.9 11.3M1319.3 29.3L1337.3 11.3M1323.7 29.3L1341.7 11.3M1328.1 29.3L1346.1 11.3M1332.5 29.3L1350.5 11.3" clip-path="url(#be1)" stroke-width="1.2"/><circle cx="1315.1" cy="20.3" r="7.6"/>
<clipPath id="be2"><circle cx="1345" cy="20.3" r="7.6"/></clipPath>
<path d="M1309.6 29.3L1327.6 11.3M1314.0 29.3L1332.0 11.3M1318.4 29.3L1336.4 11.3M1322.8 29.3L1340.8 11.3M1327.2 29.3L1345.2 11.3M1331.6 29.3L1349.6 11.3M1336.0 29.3L1354.0 11.3M1340.4 29.3L1358.4 11.3M1344.8 29.3L1362.8 11.3M1349.2 29.3L1367.2 11.3M1353.6 29.3L1371.6 11.3M1358.0 29.3L1376.0 11.3M1362.4 29.3L1380.4 11.3" clip-path="url(#be2)" stroke-width="1.2"/><circle cx="1345" cy="20.3" r="7.6"/>
<clipPath id="be3"><circle cx="1315.1" cy="49.8" r="7.6"/></clipPath>
<path d="M1279.7 58.8L1297.7 40.8M1284.1 58.8L1302.1 40.8M1288.5 58.8L1306.5 40.8M1292.9 58.8L1310.9 40.8M1297.3 58.8L1315.3 40.8M1301.7 58.8L1319.7 40.8M1306.1 58.8L1324.1 40.8M1310.5 58.8L1328.5 40.8M1314.9 58.8L1332.9 40.8M1319.3 58.8L1337.3 40.8M1323.7 58.8L1341.7 40.8M1328.1 58.8L1346.1 40.8M1332.5 58.8L1350.5 40.8" clip-path="url(#be3)" stroke-width="1.2"/><circle cx="1315.1" cy="49.8" r="7.6"/>
<clipPath id="be4"><circle cx="1345" cy="49.8" r="7.6"/></clipPath>
<path d="M1309.6 58.8L1327.6 40.8M1314.0 58.8L1332.0 40.8M1318.4 58.8L1336.4 40.8M1322.8 58.8L1340.8 40.8M1327.2 58.8L1345.2 40.8M1331.6 58.8L1349.6 40.8M1336.0 58.8L1354.0 40.8M1340.4 58.8L1358.4 40.8M1344.8 58.8L1362.8 40.8M1349.2 58.8L1367.2 40.8M1353.6 58.8L1371.6 40.8M1358.0 58.8L1376.0 40.8M1362.4 58.8L1380.4 40.8" clip-path="url(#be4)" stroke-width="1.2"/><circle cx="1345" cy="49.8" r="7.6"/>
<rect x="1315.1" y="20.3" width="29.9" height="29.5" fill="#f8f8f8"/>
<path d="M1411.7 21.4H1430.6V27.5a3.1 3.1 0 1 0 0 6.2V39.9H1424.4a3.1 3.1 0 1 1 -6.2 0H1411.7Z"/>
<path d="M1411.7 39.9V58.9H1430.6V52.7a3.1 3.1 0 1 1 0 -6.2V39.9"/>
<path d="M1430.6 58.9H1449.8V39.9H1443.3a3.1 3.1 0 1 0 -6.2 0H1430.6"/>
<path d="M1446.8 9.2L1460 22.6L1446.6 36L1442.4 31.7a3.1 3.1 0 1 0 -4.6 -4.4L1433.2 22.9L1437.6 18.5a3.1 3.1 0 1 1 4.6 -4.4Z"/>
</g>
<text x="155.9" y="25.8" font-family="'Liberation Sans', sans-serif" font-size="8.3" font-weight="bold" fill="#2d3537" textLength="20.6" lengthAdjust="spacingAndGlyphs">AUTO</text>
<path d="M498.8 11.8V58M1382.7 11.8V58" stroke="#6c7477" stroke-width="1.5" fill="none"/>
<g fill="none" stroke="#c9c9c9" stroke-width="1.3" stroke-linejoin="round">
<path d="M296.2 10H323.9L330.3 16.3V52.2H296.2Z"/><path d="M304.6 17.8H332.5L339 23.6V59.8H304.6Z" fill="#f8f8f8"/><rect x="315.6" y="27.8" width="13.8" height="22.4" rx="6.9"/>
<path d="M360.2 10H388.2L394.6 16.3V52.2H360.2Z"/><path d="M368.7 17.8H396.7L403.1 23.6V59.8H368.7Z" fill="#f8f8f8"/><path d="M379.8 50.7V29.6H388a6.2 6.2 0 0 1 0 12.4H379.8" stroke-width="1.6"/>
<path d="M1247.4 43.1H1291.4V57.6H1247.4Z"/><path d="M1257.5 32.3H1281.1V42H1257.5Z" stroke-dasharray="1.3 1.3"/><path d="M1265.1 13L1285.4 22.7L1281.1 30.4L1260.6 21.4Z"/><path d="M1257 22.7Q1251 24 1249.8 30"/><path d="M1243.4 28.6L1255.2 31.2L1247 39Z"/>
</g>
<g fill="none" stroke="#c3c3c3" stroke-width="1.3">
<rect x="866.5" y="11.2" width="34.8" height="34.1"/><rect x="850.7" y="23.9" width="34.8" height="34.4"/>
<path d="M866.5 26.3L868.9 23.9M866.5 29.7L872.3 23.9M866.5 33.1L875.7 23.9M866.5 36.5L879.1 23.9M866.5 39.9L882.5 23.9M866.5 43.3L885.5 24.3M867.9 45.3L885.5 27.7M871.3 45.3L885.5 31.1M874.7 45.3L885.5 34.5M878.1 45.3L885.5 37.9M881.5 45.3L885.5 41.3M884.9 45.3L885.5 44.7" stroke-width="0.9"/>
</g>
<rect x="918.5" y="1005.5" width="560.5" height="111" rx="3.5" fill="#fff" stroke="#0c9a33" stroke-width="1.2"/>
<path d="M921.5 1005H927V1117H921.5a3.5 3.5 0 0 1 -3.5 -3.5V1008.5a3.5 3.5 0 0 1 3.5 -3.5Z" fill="#0c9a33"/>
<g font-family="'Liberation Sans', 'Noto Sans CJK JP', sans-serif" font-size="19" fill="#37393a">
<text x="941" y="1033.5" textLength="313" lengthAdjust="spacingAndGlyphs">オブジェクト名: example-Body.step</text>
<text x="941" y="1055.8" textLength="208" lengthAdjust="spacingAndGlyphs">サイズ: 65 x 73 x 30 mm</text>
<text x="941" y="1078.2" textLength="219" lengthAdjust="spacingAndGlyphs">ボリューム: 24490.1 mm³</text>
<text x="941" y="1100.7" textLength="121" lengthAdjust="spacingAndGlyphs">三角形: 856 個</text>
</g>
<circle cx="1448.5" cy="1031.6" r="19" fill="#ececec"/><path d="M1438 1021.2L1459 1042M1459 1021.2L1438 1042" stroke="#7b7b7b" stroke-width="1.6" fill="none"/>
<circle cx="1456" cy="1098.6" r="8.7" fill="#ececec"/><path d="M1450.5 1098.6H1461.5" stroke="#c6c6c6" stroke-width="1.6"/>
<path d="M935.3 831.2V854.6L940.6 849.9L944.2 857.5L948.6 855.5L945.4 849.4H952.6Z" fill="#fff" stroke="#0b0b16" stroke-width="1.1" stroke-linejoin="miter"/>
</svg>
</body></html>
